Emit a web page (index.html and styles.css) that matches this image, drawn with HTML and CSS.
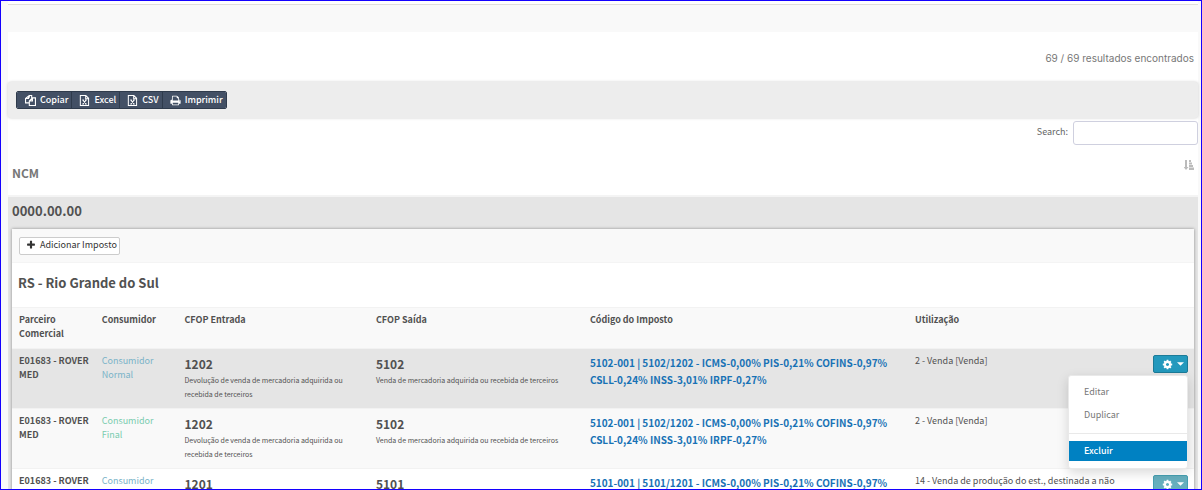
FILE: index.html
```
<!DOCTYPE html>
<html lang="pt-BR">
<head>
<meta charset="utf-8">
<meta name="viewport" content="width=device-width, initial-scale=1">
<title>NCM</title>
<link rel="stylesheet" href="styles.css">
</head>
<body>
<svg class="sprite" aria-hidden="true">
  <symbol id="copy" viewBox="0 0 14 14"><path d="M5.500 3.500V.7h3v3M5.500.7L.7 4.500V10H5M.7 4.500H4.500V1.500M9.500 3.700h3.800v9.600H5.500V7.500zM5.500 7.500h4V3.700" fill="none" stroke="currentColor" stroke-width="1.400"/></symbol>
  <symbol id="excel" viewBox="0 0 14 14"><path d="M1.700.7h7l3.500 3.500v9.100H1.700zM8.500.7v4h4M5 6.500l4 5M9 6.500l-4 5M4.200 6.500h2M7.800 6.500h2M4.200 11.500h2M7.800 11.500h2" fill="none" stroke="currentColor" stroke-width="1.300"/></symbol>
  <symbol id="print" viewBox="0 0 1792 1792"><path fill="currentColor" d="M448 1536h896v-256h-896v256zm0-640h896v-384h-160q-40 0-68-28t-28-68v-160h-640v640zm1152 64q0-26-19-45t-45-19-45 19-19 45 19 45 45 19 45-19 19-45zm128 0v416q0 13-9.500 22.500t-22.500 9.500h-224v160q0 40-28 68t-68 28h-960q-40 0-68-28t-28-68v-160h-224q-13 0-22.500-9.500t-9.500-22.500v-416q0-79 56.500-135.500t135.500-56.500h64v-544q0-40 28-68t68-28h672q40 0 88 20t76 48l152 152q28 28 48 76t20 88v256h64q79 0 135.500 56.500t56.500 135.500z"/></symbol>
  <symbol id="plus" viewBox="0 0 1792 1792"><path fill="currentColor" d="M1600 736v192q0 40-28 68t-68 28h-416v416q0 40-28 68t-68 28h-192q-40 0-68-28t-28-68v-416h-416q-40 0-68-28t-28-68v-192q0-40 28-68t68-28h416v-416q0-40 28-68t68-28h192q40 0 68 28t28 68v416h416q40 0 68 28t28 68z"/></symbol>
  <symbol id="cog" viewBox="0 0 1792 1792"><path fill="currentColor" d="M1152 896q0-106-75-181t-181-75-181 75-75 181 75 181 181 75 181-75 75-181zm512-109v222q0 12-8 23t-20 13l-185 28q-19 54-39 91 35 50 107 138 10 12 10 25t-9 23q-27 37-99 108t-94 71q-12 0-26-9l-138-108q-44 23-91 38-16 136-29 186-7 28-36 28h-222q-14 0-24.500-8.500t-11.500-21.500l-28-184q-49-16-90-37l-141 107q-10 9-25 9-14 0-25-11-126-114-165-168-7-10-7-23 0-12 8-23 15-21 51-66.500t54-70.500q-27-50-41-99l-183-27q-13-2-21-12.500t-8-23.500v-222q0-12 8-23t19-13l186-28q14-46 39-92-40-57-107-138-10-12-10-24 0-10 9-23 26-36 98.500-107.500t94.500-71.500q13 0 26 10l138 107q44-23 91-38 16-136 29-186 7-28 36-28h222q14 0 24.500 8.500t11.500 21.500l28 184q49 16 90 37l142-107q9-9 24-9 13 0 25 10 129 119 165 170 7 8 7 22 0 12-8 23-15 21-51 66.500t-54 70.500q26 50 41 98l183 28q13 2 21 12.500t8 23.500z"/></symbol>
  <symbol id="caret" viewBox="0 0 8 4"><path fill="currentColor" d="M0 0h8L4 4z"/></symbol>
  <symbol id="sort" viewBox="0 0 10 10"><path fill="currentColor" d="M1 0h2v7h1.500L2 10-.500 7H1zM5 0h2v2H5zM5 2.500h3v2H5zM5 5h4v2H5zM5 7.500h5V10H5z"/></symbol>
</svg>
<div class="frame">
  <div class="topline"></div>
  <main class="content">
    <p class="count">69 / 69 resultados encontrados</p>
    <div class="toolbar">
      <div class="group">
        <button type="button" class="tool"><svg class="icon"><use href="#copy"/></svg>Copiar</button>
        <button type="button" class="tool"><svg class="icon"><use href="#excel"/></svg>Excel</button>
        <button type="button" class="tool"><svg class="icon"><use href="#excel"/></svg>CSV</button>
        <button type="button" class="tool"><svg class="icon"><use href="#print"/></svg>Imprimir</button>
      </div>
    </div>
    <div class="search">
      <label for="search">Search:</label>
      <input id="search" type="search">
    </div>
    <div class="ncm-head"><h1>NCM</h1><svg class="sort"><use href="#sort"/></svg></div>
    <section class="ncm">
      <h2 class="ncm-code">0000.00.00</h2>
      <div class="panel">
        <div class="panel-bar"><button type="button" class="add"><svg class="icon-small"><use href="#plus"/></svg>Adicionar Imposto</button></div>
        <h3 class="state">RS - Rio Grande do Sul</h3>
        <table class="taxes">
          <colgroup><col class="c-partner"><col class="c-consumer"><col class="c-in"><col class="c-out"><col class="c-tax"><col class="c-use"><col class="c-action"></colgroup>
          <thead>
            <tr><th>Parceiro Comercial</th><th>Consumidor</th><th>CFOP Entrada</th><th>CFOP Saída</th><th>Código do Imposto</th><th>Utilização</th><th></th></tr>
          </thead>
          <tbody>
            <tr class="active">
              <td class="partner">E01683 - ROVER MED</td>
              <td class="normal">Consumidor Normal</td>
              <td><strong class="cfop">1202</strong><span class="desc">Devolução de venda de mercadoria adquirida ou recebida de terceiros</span></td>
              <td><strong class="cfop">5102</strong><span class="desc">Venda de mercadoria adquirida ou recebida de terceiros</span></td>
              <td><a href="#" class="tax">5102-001 | 5102/1202 - ICMS-0,00% PIS-0,21% COFINS-0,97% CSLL-0,24% INSS-3,01% IRPF-0,27%</a></td>
              <td>2 - Venda [Venda]</td>
              <td class="action"><div class="dropdown">
                <button type="button" class="gear open" aria-label="Ações" aria-expanded="true"><svg class="icon"><use href="#cog"/></svg><svg class="caret"><use href="#caret"/></svg></button>
                <div class="menu">
                  <a href="#" class="item">Editar</a>
                  <a href="#" class="item">Duplicar</a>
                  <hr class="divider">
                  <a href="#" class="item selected">Excluir</a>
                </div>
              </div></td>
            </tr>
            <tr class="odd">
              <td class="partner">E01683 - ROVER MED</td>
              <td class="final">Consumidor Final</td>
              <td><strong class="cfop">1202</strong><span class="desc">Devolução de venda de mercadoria adquirida ou recebida de terceiros</span></td>
              <td><strong class="cfop">5102</strong><span class="desc">Venda de mercadoria adquirida ou recebida de terceiros</span></td>
              <td><a href="#" class="tax">5102-001 | 5102/1202 - ICMS-0,00% PIS-0,21% COFINS-0,97% CSLL-0,24% INSS-3,01% IRPF-0,27%</a></td>
              <td>2 - Venda [Venda]</td>
              <td></td>
            </tr>
            <tr>
              <td class="partner">E01683 - ROVER</td>
              <td class="normal">Consumidor</td>
              <td><strong class="cfop">1201</strong></td>
              <td><strong class="cfop">5101</strong></td>
              <td><a href="#" class="tax">5101-001 | 5101/1201 - ICMS-0,00% PIS-0,21% COFINS-0,97%</a></td>
              <td>14 - Venda de produção do est., destinada a não</td>
              <td class="action"><button type="button" class="gear" aria-label="Ações"><svg class="icon"><use href="#cog"/></svg><svg class="caret"><use href="#caret"/></svg></button></td>
            </tr>
          </tbody>
        </table>
      </div>
    </section>
  </main>
</div>
</body>
</html>
```
FILE: styles.css
```
* { box-sizing: border-box; }
body {
  margin: 0;
  background: #f9f9f9;
  color: #515151;
  font: 9px/14px "Noto Sans CJK SC", "Noto Sans", sans-serif;
}
h1, h2, h3, p { margin: 0; }
button, input { font: inherit; }
.sprite { display: none; }
.icon { width: 11px; height: 11px; flex: none; }
.icon-small { width: 10px; height: 10px; flex: none; }

.frame {
  height: 100vh;
  overflow: hidden;
  border: 1px solid #1400ff;
  padding: 0 3px 0 7px;
}
.topline { height: 4px; background: #fff; border-bottom: 1px solid #e0dedc; }
.content { margin-top: 27px; background: #fff; }
.count {
  padding: 19px 4px 17px 0;
  text-align: right;
  color: #777;
  font: 10px/14px Inter, sans-serif;
}
.toolbar {
  padding: 9px 8px;
  background: #ededed;
  border-radius: 3px;
  box-shadow: 0 0 3px #ccc;
}
.group {
  display: inline-flex;
  vertical-align: top;
  border: 1px solid #2f3b4c;
  border-radius: 2px;
  overflow: hidden;
}
.tool {
  display: flex;
  align-items: center;
  gap: 4px;
  height: 16px;
  padding: 0 3px 0 8px;
  border: 0;
  border-right: 1px solid #2f3b4c;
  background: #435065;
  color: #fff;
  font-weight: 500;
}
.tool + .tool { padding-left: 7px; }
.tool:last-child { border-right: 0; }
.search { display: flex; justify-content: flex-end; gap: 5px; padding-top: 3px; }
.search label { padding-top: 4px; color: #666; }
.search input {
  width: 125px;
  height: 24px;
  border: 1px solid #cfd0df;
  border-radius: 3px;
  background: #fff;
}
.ncm-head {
  display: flex;
  justify-content: space-between;
  padding: 15px 4px 12px;
  border-bottom: 2px solid #f4f4f4;
}
.ncm-head h1 { padding-top: 3px; font-size: 12px; line-height: 20px; color: #777; }
.sort { width: 10px; height: 10px; color: #bbb; }
.ncm { background: #e5e5e5; padding: 0 4px; }
.ncm-code { padding-bottom: 4px; font-size: 13px; line-height: 28px; }
.panel { background: #fff; box-shadow: 0 0 3px #888; }
.panel-bar { padding: 8px 7px 7px; background: #f9f9f9; border-bottom: 1px solid #f4f4f4; }
.add {
  display: flex;
  align-items: center;
  gap: 4px;
  height: 18px;
  padding: 0 2px 2px 6px;
  border: 1px solid #ccc;
  border-radius: 2px;
  background: #fff;
  color: #333;
}
.state { padding: 0 6px 4px; font-size: 13px; line-height: 40px; }

.taxes { width: 100%; table-layout: fixed; border-collapse: collapse; }
.c-partner, .c-consumer { width: 7%; }
.c-in { width: 16.2%; }
.c-out { width: 18.1%; }
.c-tax { width: 27.5%; }
.c-use { width: 20%; }
.taxes th, .taxes td {
  padding: 5px 7px;
  border-top: 1px solid #f2f2f2;
  text-align: left;
  vertical-align: top;
}
.taxes th { height: 41px; background: #f9f9f9; font-weight: 700; }
.taxes td { height: 60px; }
.taxes .partner { padding-right: 0; font-weight: 700; }
.active td { background: #e5e5e5; }
.odd td { background: #f9f9f9; }
.normal { color: #7ab3c8; }
.final { color: #7accaf; }
.cfop { display: block; padding-top: 1px; font-size: 12px; line-height: 18px; }
.desc { display: block; font-size: 7px; line-height: 14px; }
.tax {
  display: block;
  color: #1872b5;
  font-size: 10px;
  font-weight: 700;
  line-height: 17px;
  text-decoration: none;
}
.taxes .action { padding: 6px 6px 4px 0; }
.dropdown { position: relative; }
.gear {
  display: flex;
  align-items: center;
  justify-content: center;
  gap: 4px;
  width: 35px;
  height: 18px;
  margin-left: auto;
  padding: 0 0 0 4px;
  border: 1px solid #46a0b2;
  border-radius: 2px;
  background: #66afbe;
  color: #fff;
}
.gear.open { background: #2399bd; border-color: #1c7b98; }
.caret { width: 7px; height: 4px; }
.menu {
  position: absolute;
  z-index: 2;
  top: 20px;
  right: 0;
  width: 120px;
  padding: 4px 0 7px;
  border: 1px solid #e9e9e9;
  border-radius: 3px;
  background: #fff;
  box-shadow: 0 4px 12px rgba(0, 0, 0, .15);
}
.item {
  display: block;
  padding: 0 15px;
  color: #777;
  line-height: 23px;
  text-decoration: none;
}
.divider { margin: 7px 0; border: 0; border-top: 1px solid #e9e9e9; }
.item.selected { background: #0081c2; color: #fff; font-weight: 500; line-height: 20px; }
```
